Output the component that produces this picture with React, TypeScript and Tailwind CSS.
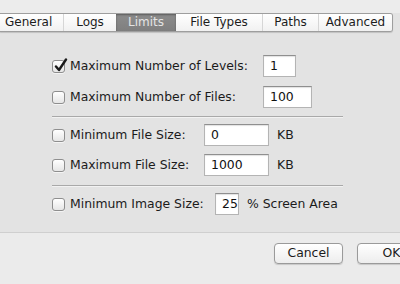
import React from 'react';

const TABS = [
  { label: 'General', w: 'w-[63px]', pad: 'pl-[5px] justify-start' },
  { label: 'Logs', w: 'w-[53px]', pad: 'justify-center' },
  { label: 'Limits', w: 'w-[60px]', pad: 'justify-center', active: true },
  { label: 'File Types', w: 'w-[86px]', pad: 'justify-center' },
  { label: 'Paths', w: 'w-[56px]', pad: 'justify-center' },
  { label: 'Advanced', w: 'w-[74px]', pad: 'justify-center' },
];

function Checkbox({ checked }: { checked?: boolean }) {
  return (
    <span className="relative shrink-0 w-[13px] h-[13px] rounded-[3px] border border-[#8e8e8e] bg-gradient-to-b from-white to-[#e6e6e6] shadow-[0_1px_0_rgba(255,255,255,0.6)]">
      {checked && (
        <svg
          className="absolute left-[1px] top-[-3px]"
          width="14"
          height="15"
          viewBox="0 0 14 15"
        >
          <path
            d="M2 8.5 L5 12 L12 1.5"
            fill="none"
            stroke="#1a1a1a"
            strokeWidth="2.4"
            strokeLinecap="round"
            strokeLinejoin="round"
          />
        </svg>
      )}
    </span>
  );
}

function Field({ value, w }: { value: string; w: string }) {
  return (
    <div
      className={`${w} h-[22px] shrink-0 flex items-center pl-[6px] bg-white border border-[#b4b4b4] border-t-[#8f8f8f] shadow-[inset_0_1px_1px_rgba(0,0,0,0.12)] text-[#111]`}
    >
      {value}
    </div>
  );
}

function Row({
  label,
  labelW,
  value,
  fieldW,
  unit,
  checked,
}: {
  label: string;
  labelW: string;
  value: string;
  fieldW: string;
  unit?: string;
  checked?: boolean;
}) {
  return (
    <div className="h-[22px] flex items-center">
      <div className={`${labelW} flex items-center gap-[5px]`}>
        <Checkbox checked={checked} />
        <span className="text-[#1b1b1b]">{label}</span>
      </div>
      <Field value={value} w={fieldW} />
      {unit && <span className="ml-[8px] text-[#1b1b1b]">{unit}</span>}
    </div>
  );
}

function Separator() {
  return <div className="w-[291px] h-[2px] border-t border-[#a9a9a9] border-b border-b-[#f2f2f2]" />;
}

export default function App() {
  return (
    <div
      className="w-[400px] h-[284px] overflow-hidden bg-[#ececec] flex flex-col text-[12px] leading-none"
      style={{ fontFamily: '"DejaVu Sans", "Liberation Sans", sans-serif' }}
    >
      <div className="h-[13px] shrink-0" />

      <div className="flex-1 flex flex-col bg-[#e3e3e3] border-b border-[#cfcfcf]">
        <div className="flex h-[19px]">
          <div className="flex h-[19px] border border-[#9e9e9e] border-l-0 rounded-r-[3px] overflow-hidden shadow-[0_1px_1px_rgba(0,0,0,0.15)]">
            {TABS.map((t, i) => (
              <div
                key={t.label}
                className={`${t.w} ${t.pad} h-full flex items-center pb-[1px] ${
                  t.active
                    ? 'bg-gradient-to-b from-[#8c8c8c] to-[#7f7f7f] text-[#e4e4e4] shadow-[inset_0_1px_2px_rgba(0,0,0,0.35)]'
                    : 'bg-gradient-to-b from-white to-[#f1f1f1] text-[#1c1c1c]'
                } ${i > 0 && !t.active && !TABS[i - 1].active ? 'border-l border-[#d6d6d6]' : ''}`}
              >
                {t.label}
              </div>
            ))}
          </div>
        </div>

        <div className="flex flex-col pl-[52px] pt-[23px] text-[12.4px]">
          <Row label="Maximum Number of Levels:" labelW="w-[211px]" value="1" fieldW="w-[33px]" checked />
          <div className="h-[9px]" />
          <Row label="Maximum Number of Files:" labelW="w-[211px]" value="100" fieldW="w-[49px]" />
          <div className="h-[8px]" />
          <Separator />
          <div className="h-[6px]" />
          <Row label="Minimum File Size:" labelW="w-[152px]" value="0" fieldW="w-[65px]" unit="KB" />
          <div className="h-[8px]" />
          <Row label="Maximum File Size:" labelW="w-[152px]" value="1000" fieldW="w-[65px]" unit="KB" />
          <div className="h-[9px]" />
          <Separator />
          <div className="h-[6px]" />
          <Row label="Minimum Image Size:" labelW="w-[163px]" value="25" fieldW="w-[24px]" unit="% Screen Area" />
        </div>
      </div>

      <div className="h-[51px] shrink-0 bg-[#ebebeb] flex items-start pt-[10px] pl-[274px] gap-[14px]">
        <button className="w-[69px] h-[21px] shrink-0 rounded-[4px] border border-[#9a9a9a] bg-gradient-to-b from-white to-[#ededed] shadow-[0_1px_1px_rgba(0,0,0,0.15)] text-[#1b1b1b] text-[12.4px]">
          Cancel
        </button>
        <button className="w-[69px] h-[21px] shrink-0 rounded-[4px] border border-[#9a9a9a] bg-gradient-to-b from-white to-[#ededed] shadow-[0_1px_1px_rgba(0,0,0,0.15)] text-[#1b1b1b] text-[12.4px]">
          OK
        </button>
      </div>
    </div>
  );
}
